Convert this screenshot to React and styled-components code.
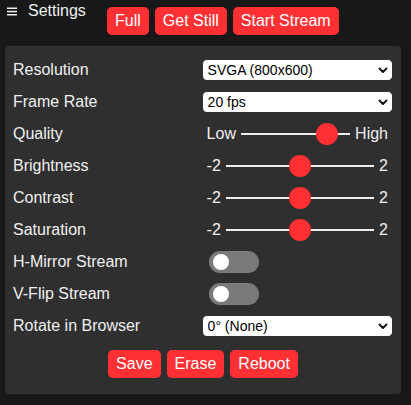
import React from 'react'
import styled, { createGlobalStyle } from 'styled-components'

const GlobalStyle = createGlobalStyle`
  body {
    margin: 0;
    background: #181818;
    color: #efefef;
    font-family: "Liberation Sans", Arial, Helvetica, sans-serif;
    font-size: 16px;
  }
`

const Chevron = () => (
  <svg width="10" height="7" viewBox="0 0 10 7">
    <path d="M1.5 1.5 L5 5 L8.5 1.5" fill="none" stroke="#111" strokeWidth="2" strokeLinecap="round" strokeLinejoin="round" />
  </svg>
)

const Burger = () => (
  <svg width="10" height="9" viewBox="0 0 10 9">
    <rect x="0" y="0.5" width="10" height="1.5" fill="#efefef" />
    <rect x="0" y="3.8" width="10" height="1.5" fill="#efefef" />
    <rect x="0" y="7" width="10" height="1.5" fill="#efefef" />
  </svg>
)

const Select = ({ value, options }) => (
  <SelectWrap>
    <NativeSelect defaultValue={value}>
      {options.map(o => (
        <option key={o}>{o}</option>
      ))}
    </NativeSelect>
    <ChevronBox>
      <Chevron />
    </ChevronBox>
  </SelectWrap>
)

const Range = ({ min, max, value, minLabel, maxLabel }) => (
  <RangeBox>
    <RangeEnd>{minLabel}</RangeEnd>
    <RangeInput type="range" min={min} max={max} defaultValue={value} />
    <RangeEnd>{maxLabel}</RangeEnd>
  </RangeBox>
)

const Switch = () => (
  <SwitchBox>
    <SwitchTrack>
      <SwitchKnob />
    </SwitchTrack>
  </SwitchBox>
)

const App = () => {
  return (
    <Page>
      <GlobalStyle />
      <Header>
        <Title>
          <Burger />
          <span>Settings</span>
        </Title>
        <Button>Full</Button>
        <Button>Get Still</Button>
        <Button>Start Stream</Button>
      </Header>
      <Menu>
        <InputGroup>
          <Label>Resolution</Label>
          <Select value="SVGA (800x600)" options={['UXGA (1600x1200)', 'SXGA (1280x1024)', 'XGA (1024x768)', 'SVGA (800x600)', 'VGA (640x480)']} />
        </InputGroup>
        <InputGroup>
          <Label>Frame Rate</Label>
          <Select value="20 fps" options={['10 fps', '15 fps', '20 fps', '25 fps', '30 fps']} />
        </InputGroup>
        <InputGroup>
          <Label>Quality</Label>
          <Range min={0} max={100} value={86} minLabel="Low" maxLabel="High" />
        </InputGroup>
        <InputGroup>
          <Label>Brightness</Label>
          <Range min={-2} max={2} value={0} minLabel="-2" maxLabel="2" />
        </InputGroup>
        <InputGroup>
          <Label>Contrast</Label>
          <Range min={-2} max={2} value={0} minLabel="-2" maxLabel="2" />
        </InputGroup>
        <InputGroup>
          <Label>Saturation</Label>
          <Range min={-2} max={2} value={0} minLabel="-2" maxLabel="2" />
        </InputGroup>
        <InputGroup>
          <Label>H-Mirror Stream</Label>
          <Switch />
        </InputGroup>
        <InputGroup>
          <Label>V-Flip Stream</Label>
          <Switch />
        </InputGroup>
        <InputGroup>
          <Label>Rotate in Browser</Label>
          <Select value="0° (None)" options={['0° (None)', '90° (Right)', '180°', '270° (Left)']} />
        </InputGroup>
        <ButtonRow>
          <Button>Save</Button>
          <Button>Erase</Button>
          <Button>Reboot</Button>
        </ButtonRow>
      </Menu>
    </Page>
  )
}

export default App

const Page = styled.div`
  padding: 0 10px 0 5px;
`
const Header = styled.div`
  display: flex;
  align-items: flex-start;
  height: 46px;
`
const Title = styled.div`
  display: flex;
  align-items: center;
  gap: 11px;
  width: 97px;
  padding-left: 2px;
  line-height: 22px;
  svg {
    margin-top: 1px;
  }
`
const Button = styled.button`
  display: block;
  margin: 7px 3px 0;
  padding: 0 8px;
  border: 0;
  line-height: 28px;
  color: #fff;
  background: #ff3034;
  border-radius: 5px;
  font-family: inherit;
  font-size: 16px;
  cursor: pointer;
  outline: 0;
  :hover {
    background: #ff494d;
  }
`
const Menu = styled.div`
  display: flex;
  flex-direction: column;
  background: #2f2f2f;
  padding: 8px;
  border-radius: 4px;
`
const InputGroup = styled.div`
  display: flex;
  flex-wrap: nowrap;
  line-height: 22px;
  margin: 5px 0;
`
const Label = styled.label`
  display: inline-block;
  padding-right: 10px;
  min-width: 47%;
`
const SelectWrap = styled.div`
  position: relative;
  flex-grow: 1;
  display: flex;
`
const NativeSelect = styled.select`
  appearance: none;
  -webkit-appearance: none;
  flex-grow: 1;
  height: 22px;
  border: 1px solid #2f2f2f;
  border-radius: 5px;
  background: #fff;
  color: #000;
  font-family: "Liberation Sans", Arial, sans-serif;
  font-size: 14px;
  padding: 0 4px 0 5px;
  outline: 0;
`
const ChevronBox = styled.span`
  position: absolute;
  right: 5px;
  top: 8px;
  display: flex;
  pointer-events: none;
`
const RangeBox = styled.div`
  display: flex;
  flex-grow: 1;
  align-items: center;
`
const RangeEnd = styled.span`
  display: inline-block;
  padding: 0 5px;
`
const RangeInput = styled.input`
  -webkit-appearance: none;
  appearance: none;
  flex-grow: 1;
  width: 100%;
  height: 22px;
  background: transparent;
  margin: 0;
  cursor: pointer;
  &::-webkit-slider-runnable-track {
    width: 100%;
    height: 2px;
    background: #efefef;
    border: 0;
  }
  &::-webkit-slider-thumb {
    -webkit-appearance: none;
    height: 22px;
    width: 22px;
    border-radius: 50%;
    background: #ff3034;
    border: 0;
    margin-top: -10px;
  }
`
const SwitchBox = styled.div`
  display: block;
  height: 22px;
  padding-left: 7px;
`
const SwitchTrack = styled.div`
  width: 50px;
  height: 22px;
  border-radius: 22px;
  background: #7a7a7a;
  cursor: pointer;
`
const SwitchKnob = styled.div`
  position: relative;
  left: 4px;
  top: 3px;
  width: 16px;
  height: 16px;
  border-radius: 50%;
  background: #fff;
`
const ButtonRow = styled.div`
  display: flex;
  justify-content: center;
  margin-top: 8px;
  margin-bottom: 8px;
  button {
    margin: 0 3px;
  }
`
